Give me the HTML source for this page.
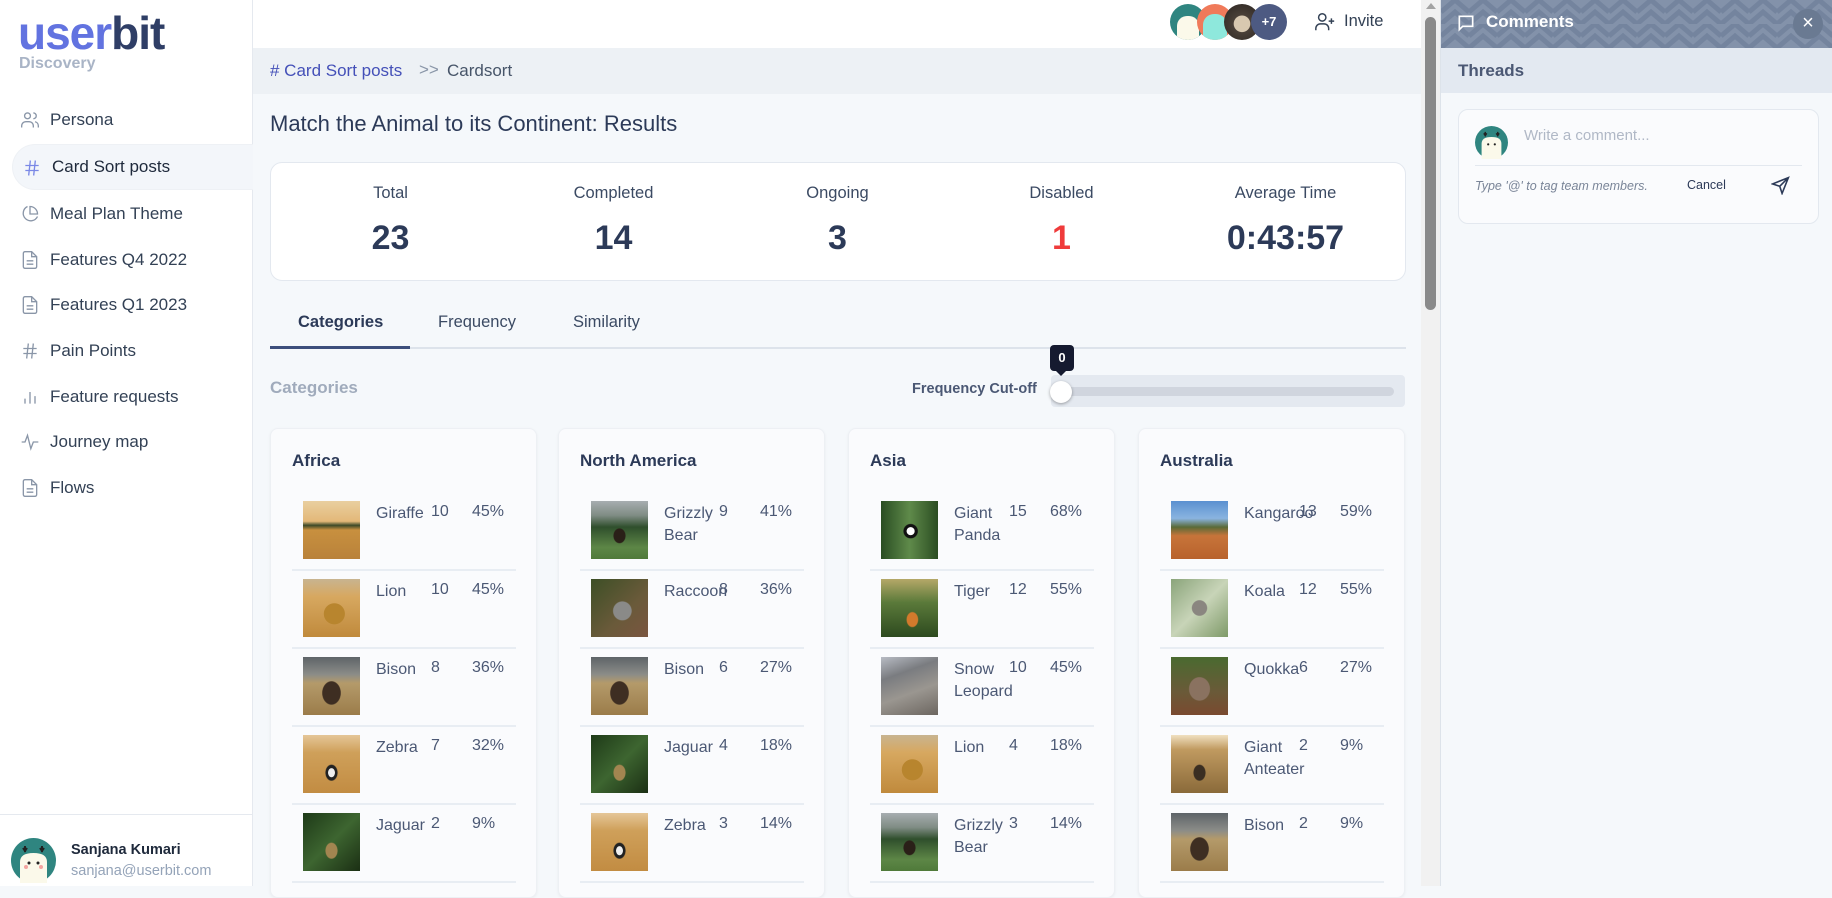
<!DOCTYPE html>
<html><head><meta charset="utf-8"><style>
*{box-sizing:border-box;margin:0;padding:0}
body{width:1832px;height:886px;overflow:hidden;font-family:"Liberation Sans",sans-serif;background:#f5f8fb;position:relative;color:#334155}
.abs{position:absolute}
.side{left:0;top:0;width:253px;height:886px;background:#fff;border-right:1px solid #e5e9ef}
.logo{left:18px;top:6px;font-size:46px;font-weight:bold;letter-spacing:-1px;color:#2f3e66}
.logo span{color:#6273e0}
.disc{left:19px;top:55px;font-size:16px;font-weight:bold;color:#a9b4c6}
.nav{left:0;width:253px;height:46px;font-size:17px;color:#334155;display:flex;align-items:center}
.nav .ic{position:absolute;left:20px;top:13px;width:20px;height:20px}
.nav .t{position:absolute;left:50px}
.act{left:12px;width:241px;background:#f3f6fa;border-radius:23px 0 0 23px;border:1px solid #eef1f5;border-right:none}
.top{left:253px;top:0;width:1168px;height:48px;background:#fff}
.bc{left:253px;top:48px;width:1168px;height:46px;background:#edf1f5;font-size:17px}
.card{background:#fff;border:1px solid #e3e8ef;border-radius:12px}
.stat{top:184px;width:227px;text-align:center;font-size:16.5px;color:#3b4a63}
.val{top:219px;width:227px;text-align:center;font-size:34px;font-weight:bold;color:#2c3a58}
.tab{top:313px;font-size:16.5px;color:#3b4a63}
.cc{top:428px;width:267px;height:470px;background:#fafbfd;border:1px solid #edf0f4;border-radius:8px;box-shadow:0 1px 3px rgba(0,0,0,.05)}
.cc h3{position:absolute;left:21px;top:22px;font-size:17px;color:#2c3a58}
.row{position:absolute;left:21px;width:224px;height:78px;border-bottom:2px solid #e8edf3}
.row .im{position:absolute;left:11px;top:8px;width:57px;height:58px}
.row .n{position:absolute;left:84px;top:10px;width:56px;font-size:16px;line-height:22px;color:#4b5874}
.row .c{position:absolute;left:139px;top:10px;font-size:16px;color:#4b5874}
.row .p{position:absolute;left:180px;top:10px;font-size:16px;color:#4b5874}
.sav{background:linear-gradient(#e9cfa0 0,#e3b878 35%,#3d4a28 42%,#c8903f 50%,#b9823a 100%)}
.sav2{background:radial-gradient(circle at 55% 60%,#b8852e 0 22%,transparent 23%),linear-gradient(#c8b490 0,#d7a860 30%,#c08a3c 100%)}
.bis{background:radial-gradient(ellipse at 50% 62%,#3e2e22 0 22%,transparent 24%),linear-gradient(#5e6468 0,#8b8c88 30%,#b49a6a 45%,#9b7c4a 100%)}
.zeb{background:radial-gradient(ellipse at 50% 65%,#eee 0 8%,#222 9% 14%,transparent 16%),linear-gradient(#e5c698 0,#cfa05a 30%,#c28c42 100%)}
.jag{background:radial-gradient(ellipse at 50% 65%,#a28550 0 14%,transparent 16%),linear-gradient(135deg,#1e3a18,#3d6530 50%,#1b2f14)}
.grz{background:radial-gradient(ellipse at 50% 60%,#2a2018 0 14%,transparent 16%),linear-gradient(#a7adb0 0,#7f8c84 25%,#2f4f2c 45%,#5d8646 80%,#4f7a3a 100%)}
.rac{background:radial-gradient(ellipse at 55% 55%,#8a8a88 0 20%,transparent 22%),linear-gradient(135deg,#3d4f26,#6a5a3a 60%,#7a5540)}
.pan{background:radial-gradient(circle at 52% 52%,#fff 0 9%,#111 10% 16%,transparent 18%),linear-gradient(90deg,#294d22,#5f8a4a 50%,#2b4d22)}
.tig{background:radial-gradient(ellipse at 55% 70%,#d27a2c 0 12%,transparent 14%),linear-gradient(#b5a868 0,#5b7a3a 40%,#2d4a1f 100%)}
.snw{background:linear-gradient(160deg,#b8bcc4 0,#7a7c80 30%,#9a9690 60%,#6c6660 100%)}
.kan{background:linear-gradient(#5a90d0 0,#8ab4e0 30%,#5a6a38 45%,#c7743a 60%,#b8622c 100%)}
.koa{background:radial-gradient(ellipse at 50% 50%,#8a8680 0 18%,transparent 20%),linear-gradient(135deg,#8aa47a,#c8d4b8 50%,#7e9a68)}
.quo{background:radial-gradient(ellipse at 50% 55%,#8a7260 0 25%,transparent 27%),linear-gradient(#4a6a30,#6a5a38 60%,#7a4a30)}
.ant{background:radial-gradient(ellipse at 50% 65%,#3a2e22 0 14%,transparent 16%),linear-gradient(#f0e0c0 0,#c09a60 25%,#8a6a3a 100%)}
.av{position:absolute;border-radius:50%;overflow:hidden}
.comm{left:1440px;top:0;width:392px;height:886px;background:#f5f8fb;border-left:1px solid #dde3ea}
</style></head><body>
<div class="abs side">
<div class="abs logo"><span>user</span>bit</div>
<div class="abs disc">Discovery</div>
<div class="abs nav" style="top:97px"><svg class="ic" viewBox="0 0 24 24" fill="none" stroke="#8a96a8" stroke-width="1.6"><circle cx="9" cy="7" r="3.5"/><path d="M2 21v-2a5 5 0 0 1 5-5h4a5 5 0 0 1 5 5v2M16 3.5a3.5 3.5 0 0 1 0 7M22 21v-2a5 5 0 0 0-4-4.9"/></svg><span class="t">Persona</span></div>
<div class="abs nav act" style="top:144px"><svg class="ic" style="left:9px" viewBox="0 0 24 24" fill="none" stroke="#7a88e6" stroke-width="1.6"><path d="M4 9h16M4 15h16M10 3 8 21M16 3l-2 18"/></svg><span class="t" style="left:39px;color:#1e293b">Card Sort posts</span></div>
<div class="abs nav" style="top:191px"><svg class="ic" viewBox="0 0 24 24" fill="none" stroke="#8a96a8" stroke-width="1.6"><path d="M21 15A9 9 0 1 1 9 3"/><path d="M21 12A9 9 0 0 0 12 3v9z"/></svg><span class="t">Meal Plan Theme</span></div>
<div class="abs nav" style="top:237px"><svg class="ic" viewBox="0 0 24 24" fill="none" stroke="#8a96a8" stroke-width="1.6"><path d="M14 2H6a2 2 0 0 0-2 2v16a2 2 0 0 0 2 2h12a2 2 0 0 0 2-2V8z"/><path d="M14 2v6h6M8 13h8M8 17h8"/></svg><span class="t">Features Q4 2022</span></div>
<div class="abs nav" style="top:282px"><svg class="ic" viewBox="0 0 24 24" fill="none" stroke="#8a96a8" stroke-width="1.6"><path d="M14 2H6a2 2 0 0 0-2 2v16a2 2 0 0 0 2 2h12a2 2 0 0 0 2-2V8z"/><path d="M14 2v6h6M8 13h8M8 17h8"/></svg><span class="t">Features Q1 2023</span></div>
<div class="abs nav" style="top:328px"><svg class="ic" viewBox="0 0 24 24" fill="none" stroke="#8a96a8" stroke-width="1.6"><path d="M4 9h16M4 15h16M10 3 8 21M16 3l-2 18"/></svg><span class="t">Pain Points</span></div>
<div class="abs nav" style="top:374px"><svg class="ic" viewBox="0 0 24 24" fill="none" stroke="#8a96a8" stroke-width="1.6"><path d="M6 20v-6M12 20V6M18 20v-9"/></svg><span class="t">Feature requests</span></div>
<div class="abs nav" style="top:419px"><svg class="ic" viewBox="0 0 24 24" fill="none" stroke="#8a96a8" stroke-width="1.6"><path d="M2 12h4l3-8 4 16 3-8h6"/></svg><span class="t">Journey map</span></div>
<div class="abs nav" style="top:465px"><svg class="ic" viewBox="0 0 24 24" fill="none" stroke="#8a96a8" stroke-width="1.6"><path d="M14 2H6a2 2 0 0 0-2 2v16a2 2 0 0 0 2 2h12a2 2 0 0 0 2-2V8z"/><path d="M14 2v6h6M8 13h8M8 17h8"/></svg><span class="t">Flows</span></div>
<div class="abs" style="left:0;top:814px;width:253px;border-top:1px solid #e5e9ef"></div>
<svg class="abs" style="left:11px;top:838px" width="45" height="45" viewBox="0 0 45 45"><circle cx="22.5" cy="22.5" r="22.5" fill="#2f8580"/><path d="M9 45V24q0-9 13.5-9T36 24v21z" fill="#fbf9ea"/><path d="M14 8v6M12 10l2 3 2-3M31 8v6M29 10l2 3 2-3" stroke="#222" stroke-width="2" fill="none"/><circle cx="18" cy="25" r="1.5" fill="#222"/><circle cx="27" cy="25" r="1.5" fill="#222"/><circle cx="15" cy="29" r="2" fill="#f4a4a0"/><circle cx="30" cy="29" r="2" fill="#f4a4a0"/></svg>
<div class="abs" style="left:71px;top:842px;font-size:14.5px;font-weight:bold;color:#1e293b">Sanjana Kumari</div>
<div class="abs" style="left:71px;top:863px;font-size:14.5px;color:#94a3b8">sanjana@userbit.com</div>
</div>

<div class="abs top"></div>
<div class="av" style="left:1170px;top:4px;width:36px;height:36px;background:#2f8580"><div class="abs" style="left:7px;top:12px;width:22px;height:26px;background:#fbf9ea;border-radius:10px 10px 0 0"></div></div>
<div class="av" style="left:1197px;top:4px;width:36px;height:36px;background:#f07a5a"><div class="abs" style="left:6px;top:10px;width:24px;height:28px;background:#8ee8dc;border-radius:11px 11px 0 0"></div></div>
<div class="av" style="left:1224px;top:4px;width:36px;height:36px;background:radial-gradient(circle at 50% 55%,#d8c8b0 0 30%,#4a4038 32%,#2a2420)"></div>
<div class="av" style="left:1251px;top:4px;width:36px;height:36px;background:#4d5a82;color:#fff;font-size:13px;font-weight:bold;text-align:center;line-height:36px">+7</div>
<svg class="abs" style="left:1314px;top:11px" width="22" height="22" viewBox="0 0 24 24" fill="none" stroke="#334155" stroke-width="1.6"><circle cx="9" cy="7" r="4"/><path d="M2 21v-2a5 5 0 0 1 5-5h4a5 5 0 0 1 5 5v2M19 8v6M16 11h6"/></svg>
<div class="abs" style="left:1344px;top:12px;font-size:16.5px;color:#334155">Invite</div>

<div class="abs bc"><div class="abs" style="left:17px;top:13px;color:#4450b8"># Card Sort posts</div><div class="abs" style="left:166px;top:12px;color:#8a96a8">&gt;&gt;</div><div class="abs" style="left:194px;top:13px;color:#475569">Cardsort</div></div>
<div class="abs" style="left:270px;top:111px;font-size:22px;color:#2c3a58">Match the Animal to its Continent: Results</div>

<div class="abs card" style="left:270px;top:162px;width:1136px;height:119px"></div>
<div class="abs stat" style="left:277px">Total</div><div class="abs val" style="left:277px">23</div>
<div class="abs stat" style="left:500px">Completed</div><div class="abs val" style="left:500px">14</div>
<div class="abs stat" style="left:724px">Ongoing</div><div class="abs val" style="left:724px">3</div>
<div class="abs stat" style="left:948px">Disabled</div><div class="abs val" style="left:948px;color:#ef3b3b">1</div>
<div class="abs stat" style="left:1172px">Average Time</div><div class="abs val" style="left:1172px">0:43:57</div>

<div class="abs" style="left:270px;top:347px;width:1136px;height:2px;background:#dde3eb"></div>
<div class="abs" style="left:270px;top:346px;width:140px;height:3px;background:#3d4f7c"></div>
<div class="abs tab" style="left:298px;font-weight:bold;color:#2c3a58">Categories</div>
<div class="abs tab" style="left:438px">Frequency</div>
<div class="abs tab" style="left:573px">Similarity</div>

<div class="abs" style="left:270px;top:378px;font-size:17px;font-weight:bold;color:#a0abbc">Categories</div>
<div class="abs" style="left:912px;top:381px;font-size:14.5px;font-weight:bold;color:#4b5874">Frequency Cut-off</div>
<div class="abs" style="left:1051px;top:375px;width:354px;height:32px;background:#e4e9f0;border-radius:4px"></div>
<div class="abs" style="left:1058px;top:387px;width:336px;height:9px;background:#d0d5de;border-radius:5px"></div>
<div class="abs" style="left:1050px;top:345px;width:24px;height:26px;background:#151a30;border-radius:4px;color:#fff;font-size:13px;font-weight:bold;text-align:center;line-height:26px">0</div>
<div class="abs" style="left:1056px;top:371px;border:5px solid transparent;border-top-color:#151a30;width:0;height:0"></div>
<div class="abs" style="left:1050px;top:381px;width:22px;height:22px;background:#fff;border-radius:50%;box-shadow:0 1px 3px rgba(0,0,0,.35)"></div>

<div class="abs cc" style="left:270px"><h3>Africa</h3>
<div class="row" style="top:64px"><div class="im sav"></div><div class="n">Giraffe</div><div class="c">10</div><div class="p">45%</div></div>
<div class="row" style="top:142px"><div class="im sav2"></div><div class="n">Lion</div><div class="c">10</div><div class="p">45%</div></div>
<div class="row" style="top:220px"><div class="im bis"></div><div class="n">Bison</div><div class="c">8</div><div class="p">36%</div></div>
<div class="row" style="top:298px"><div class="im zeb"></div><div class="n">Zebra</div><div class="c">7</div><div class="p">32%</div></div>
<div class="row" style="top:376px"><div class="im jag"></div><div class="n">Jaguar</div><div class="c">2</div><div class="p">9%</div></div>
</div>
<div class="abs cc" style="left:558px"><h3>North America</h3>
<div class="row" style="top:64px"><div class="im grz"></div><div class="n">Grizzly Bear</div><div class="c">9</div><div class="p">41%</div></div>
<div class="row" style="top:142px"><div class="im rac"></div><div class="n">Raccoon</div><div class="c">8</div><div class="p">36%</div></div>
<div class="row" style="top:220px"><div class="im bis"></div><div class="n">Bison</div><div class="c">6</div><div class="p">27%</div></div>
<div class="row" style="top:298px"><div class="im jag"></div><div class="n">Jaguar</div><div class="c">4</div><div class="p">18%</div></div>
<div class="row" style="top:376px"><div class="im zeb"></div><div class="n">Zebra</div><div class="c">3</div><div class="p">14%</div></div>
</div>
<div class="abs cc" style="left:848px"><h3>Asia</h3>
<div class="row" style="top:64px"><div class="im pan"></div><div class="n">Giant Panda</div><div class="c">15</div><div class="p">68%</div></div>
<div class="row" style="top:142px"><div class="im tig"></div><div class="n">Tiger</div><div class="c">12</div><div class="p">55%</div></div>
<div class="row" style="top:220px"><div class="im snw"></div><div class="n">Snow Leopard</div><div class="c">10</div><div class="p">45%</div></div>
<div class="row" style="top:298px"><div class="im sav2"></div><div class="n">Lion</div><div class="c">4</div><div class="p">18%</div></div>
<div class="row" style="top:376px"><div class="im grz"></div><div class="n">Grizzly Bear</div><div class="c">3</div><div class="p">14%</div></div>
</div>
<div class="abs cc" style="left:1138px"><h3>Australia</h3>
<div class="row" style="top:64px"><div class="im kan"></div><div class="n">Kangaroo</div><div class="c">13</div><div class="p">59%</div></div>
<div class="row" style="top:142px"><div class="im koa"></div><div class="n">Koala</div><div class="c">12</div><div class="p">55%</div></div>
<div class="row" style="top:220px"><div class="im quo"></div><div class="n">Quokka</div><div class="c">6</div><div class="p">27%</div></div>
<div class="row" style="top:298px"><div class="im ant"></div><div class="n">Giant Anteater</div><div class="c">2</div><div class="p">9%</div></div>
<div class="row" style="top:376px"><div class="im bis"></div><div class="n">Bison</div><div class="c">2</div><div class="p">9%</div></div>
</div>

<div class="abs" style="left:1421px;top:0;width:19px;height:886px;background:#f1f1f1"></div>
<div class="abs" style="left:1426px;top:3px;border:5px solid transparent;border-bottom:6px solid #a3a3a3;border-top:none;width:0"></div>
<div class="abs" style="left:1425px;top:17px;width:11px;height:293px;background:#8a8a8a;border-radius:6px"></div>

<div class="abs comm">
<svg class="abs" style="left:0;top:0" width="392" height="48"><defs><pattern id="z" width="28" height="24" patternUnits="userSpaceOnUse"><rect width="28" height="24" fill="#8392aa"/><path d="M0 12 14 0 28 12M0 24 14 12 28 24" stroke="#74849e" stroke-width="5" fill="none"/></pattern></defs><rect width="392" height="48" fill="url(#z)"/></svg>
<svg class="abs" style="left:15px;top:13px" width="20" height="20" viewBox="0 0 24 24" fill="none" stroke="#fff" stroke-width="2"><path d="M4 4h16v12H8l-4 4z"/></svg>
<div class="abs" style="left:45px;top:12px;font-size:17px;font-weight:bold;color:#fff">Comments</div>
<div class="abs" style="left:352px;top:9px;width:30px;height:30px;border-radius:50%;background:#6a7a92;color:#fff;text-align:center;line-height:29px;font-size:20px">×</div>
<div class="abs" style="left:0;top:48px;width:392px;height:45px;background:#e3e9f1"></div>
<div class="abs" style="left:17px;top:61px;font-size:17px;font-weight:bold;color:#4b5874">Threads</div>
<div class="abs" style="left:17px;top:109px;width:361px;height:115px;background:#fafbfd;border:1px solid #e3e8ef;border-radius:10px"></div>
<svg class="abs" style="left:34px;top:126px" width="33" height="33" viewBox="0 0 45 45"><circle cx="22.5" cy="22.5" r="22.5" fill="#2f8580"/><path d="M9 45V24q0-9 13.5-9T36 24v21z" fill="#fbf9ea"/><path d="M14 8v6M12 10l2 3 2-3M31 8v6M29 10l2 3 2-3" stroke="#222" stroke-width="2" fill="none"/><circle cx="18" cy="25" r="1.5" fill="#222"/><circle cx="27" cy="25" r="1.5" fill="#222"/></svg>
<div class="abs" style="left:83px;top:127px;font-size:15px;color:#b0b8c6">Write a comment...</div>
<div class="abs" style="left:34px;top:165px;width:327px;height:1px;background:#e3e8ef"></div>
<div class="abs" style="left:34px;top:179px;font-size:12.5px;font-style:italic;color:#7a8598">Type '@' to tag team members.</div>
<div class="abs" style="left:246px;top:178px;font-size:12.5px;color:#2c3a58">Cancel</div>
<svg class="abs" style="left:330px;top:176px" width="19" height="19" viewBox="0 0 24 24" fill="none" stroke="#2c3a58" stroke-width="2"><path d="M22 2 2 10l9 3 3 9zM11 13l11-11"/></svg>
</div>
</body></html>
